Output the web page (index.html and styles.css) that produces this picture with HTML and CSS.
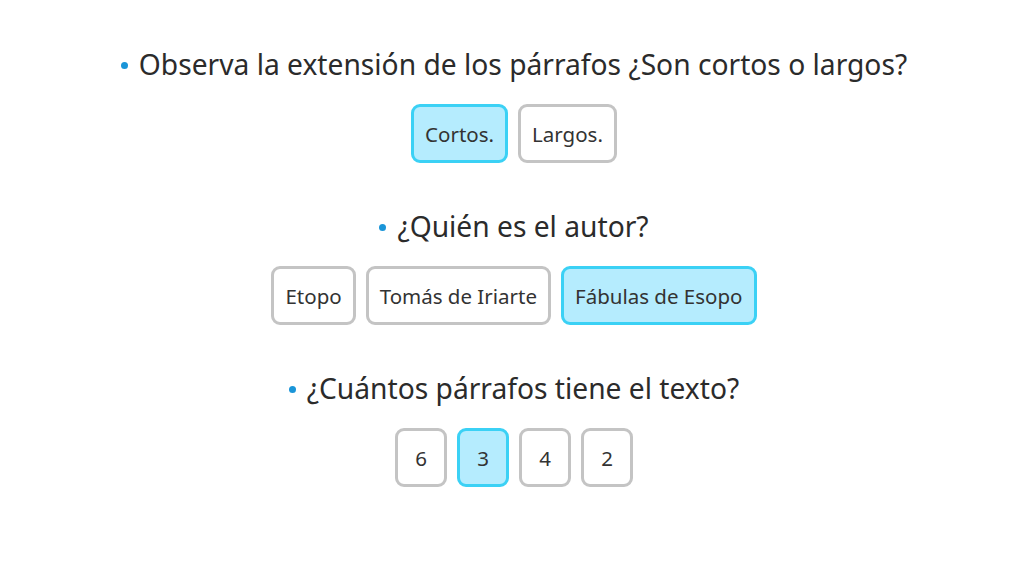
FILE: index.html
```html
<!DOCTYPE html>
<html lang="es">
<head>
<meta charset="utf-8">
<link rel="stylesheet" href="styles.css">
</head>
<body>
<main class="quiz">
  <section class="question">
    <h2 class="prompt"><span class="bullet"></span>Observa la extensión de los párrafos ¿Son cortos o largos?</h2>
    <div class="options">
      <button class="opt selected">Cortos.</button>
      <button class="opt">Largos.</button>
    </div>
  </section>
  <section class="question">
    <h2 class="prompt"><span class="bullet"></span>¿Quién es el autor?</h2>
    <div class="options">
      <button class="opt">Etopo</button>
      <button class="opt">Tomás de Iriarte</button>
      <button class="opt selected">Fábulas de Esopo</button>
    </div>
  </section>
  <section class="question">
    <h2 class="prompt"><span class="bullet"></span>¿Cuántos párrafos tiene el texto?</h2>
    <div class="options">
      <button class="opt num">6</button>
      <button class="opt num selected">3</button>
      <button class="opt num">4</button>
      <button class="opt num">2</button>
    </div>
  </section>
</main>
</body>
</html>
```
FILE: styles.css
```css
html, body {
  margin: 0;
  padding: 0;
  background: #ffffff;
}
body {
  font-family: "Noto Sans", "Open Sans", sans-serif;
  color: #2b2b2b;
}
.quiz {
  display: flex;
  flex-direction: column;
  align-items: center;
  padding-top: 44px;
  padding-left: 16px;
  gap: 43px;
}
.question {
  display: flex;
  flex-direction: column;
  align-items: center;
  gap: 20px;
}
.prompt {
  margin: 0;
  font-weight: 400;
  font-size: 28.2px;
  line-height: 40px;
  color: #2b2b2b;
}
.bullet {
  display: inline-block;
  width: 7px;
  height: 7px;
  border-radius: 50%;
  background: #1a95d8;
  margin-right: 11px;
  vertical-align: middle;
  position: relative;
  top: -2px;
}
.options {
  display: flex;
  gap: 10px;
}
.opt {
  font-family: inherit;
  font-size: 20.5px;
  color: #333333;
  background: #ffffff;
  border: 3px solid #c4c4c4;
  border-radius: 9px;
  height: 59px;
  padding: 0 11px;
  min-width: 52px;
  cursor: pointer;
}
.opt.selected {
  background: #b5ecfe;
  border-color: #3bd1f5;
}
```
